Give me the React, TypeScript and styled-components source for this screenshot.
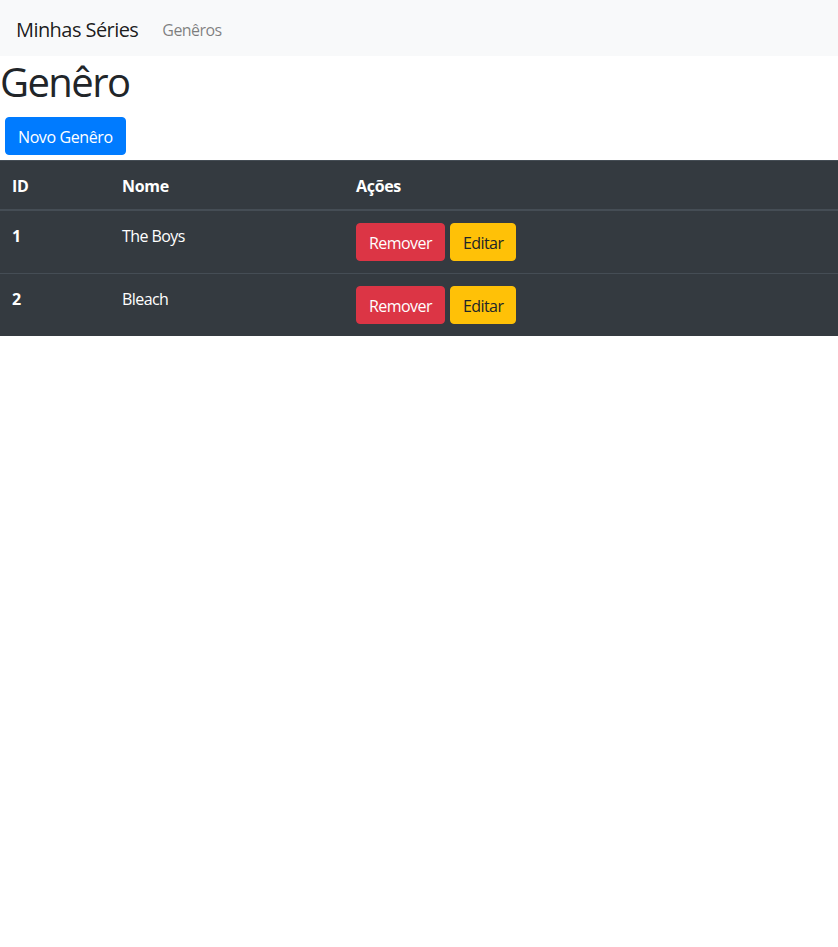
import React from 'react'
import styled, { createGlobalStyle } from 'styled-components'

const GlobalStyle = createGlobalStyle`
  body {
    margin: 0;
    font-family: 'Open Sans', 'Noto Sans', sans-serif;
    font-size: 16px;
    line-height: 1.5;
    letter-spacing: -0.035em;
    color: #212529;
    background: #fff;
  }
  * {
    box-sizing: border-box;
  }
`

const genres = [
  { id: 1, name: 'The Boys' },
  { id: 2, name: 'Bleach' },
]

const App: React.FC = () => {
  return (
    <>
      <GlobalStyle />
      <StyledNavbar>
        <StyledBrand href='#'>Minhas Séries</StyledBrand>
        <StyledNavLink href='#'>Genêros</StyledNavLink>
      </StyledNavbar>
      <StyledTitle>Genêro</StyledTitle>
      <StyledButton variant='primary'>Novo Genêro</StyledButton>
      <StyledTable>
        <thead>
          <tr>
            <StyledHeadCell style={{ width: 110 }}>ID</StyledHeadCell>
            <StyledHeadCell style={{ width: 234 }}>Nome</StyledHeadCell>
            <StyledHeadCell>Ações</StyledHeadCell>
          </tr>
        </thead>
        <tbody>
          {genres.map((genre) => (
            <tr key={genre.id}>
              <StyledRowHead>{genre.id}</StyledRowHead>
              <StyledCell>{genre.name}</StyledCell>
              <StyledCell>
                <StyledActions>
                  <StyledButton variant='danger'>Remover</StyledButton>
                  <StyledButton variant='warning'>Editar</StyledButton>
                </StyledActions>
              </StyledCell>
            </tr>
          ))}
        </tbody>
      </StyledTable>
    </>
  )
}

const StyledNavbar = styled.nav`
  display: flex;
  align-items: center;
  height: 56px;
  padding: 11px 16px 7px;
  background: #f8f9fa;
`

const StyledBrand = styled.a`
  font-size: 20px;
  line-height: 30px;
  color: rgba(0, 0, 0, 0.9);
  text-decoration: none;
  margin-right: 24px;
`

const StyledNavLink = styled.a`
  font-size: 16px;
  color: rgba(0, 0, 0, 0.5);
  text-decoration: none;
`

const StyledTitle = styled.h1`
  margin: 2px 0 6px;
  font-size: 40px;
  font-weight: 500;
  line-height: 1.2;
  letter-spacing: -0.04em;
`

const buttonColors = {
  primary: { bg: '#007bff', fg: '#fff' },
  danger: { bg: '#dc3545', fg: '#fff' },
  warning: { bg: '#ffc107', fg: '#212529' },
}

const StyledButton = styled.button<{ variant: keyof typeof buttonColors }>`
  display: inline-block;
  margin: ${(props) => (props.variant === 'primary' ? '5px' : '0')};
  padding: 7px 12px 5px;
  height: 38px;
  font-family: inherit;
  font-size: 16px;
  line-height: 24px;
  letter-spacing: ${(props) => (props.variant === 'primary' ? '-0.025em' : 'inherit')};
  border: 1px solid ${(props) => buttonColors[props.variant].bg};
  border-radius: 4px;
  background: ${(props) => buttonColors[props.variant].bg};
  color: ${(props) => buttonColors[props.variant].fg};
  cursor: pointer;
`

const StyledTable = styled.table`
  width: 100%;
  border-collapse: collapse;
  background: #343a40;
  color: #fff;
`

const StyledHeadCell = styled.th`
  padding: 13px 12px 11px;
  text-align: left;
  vertical-align: bottom;
  font-weight: 700;
  letter-spacing: -0.02em;
  border-top: 1px solid #454d55;
  border-bottom: 2px solid #454d55;
`

const StyledRowHead = styled.th`
  padding: 13px 12px 11px;
  text-align: left;
  vertical-align: top;
  font-weight: 700;
  border-top: 1px solid #454d55;
`

const StyledCell = styled.td`
  padding: 12px;
  vertical-align: top;
  border-top: 1px solid #454d55;
  line-height: 26px;
`

const StyledActions = styled.div`
  display: flex;
  gap: 5px;
`

export default App
